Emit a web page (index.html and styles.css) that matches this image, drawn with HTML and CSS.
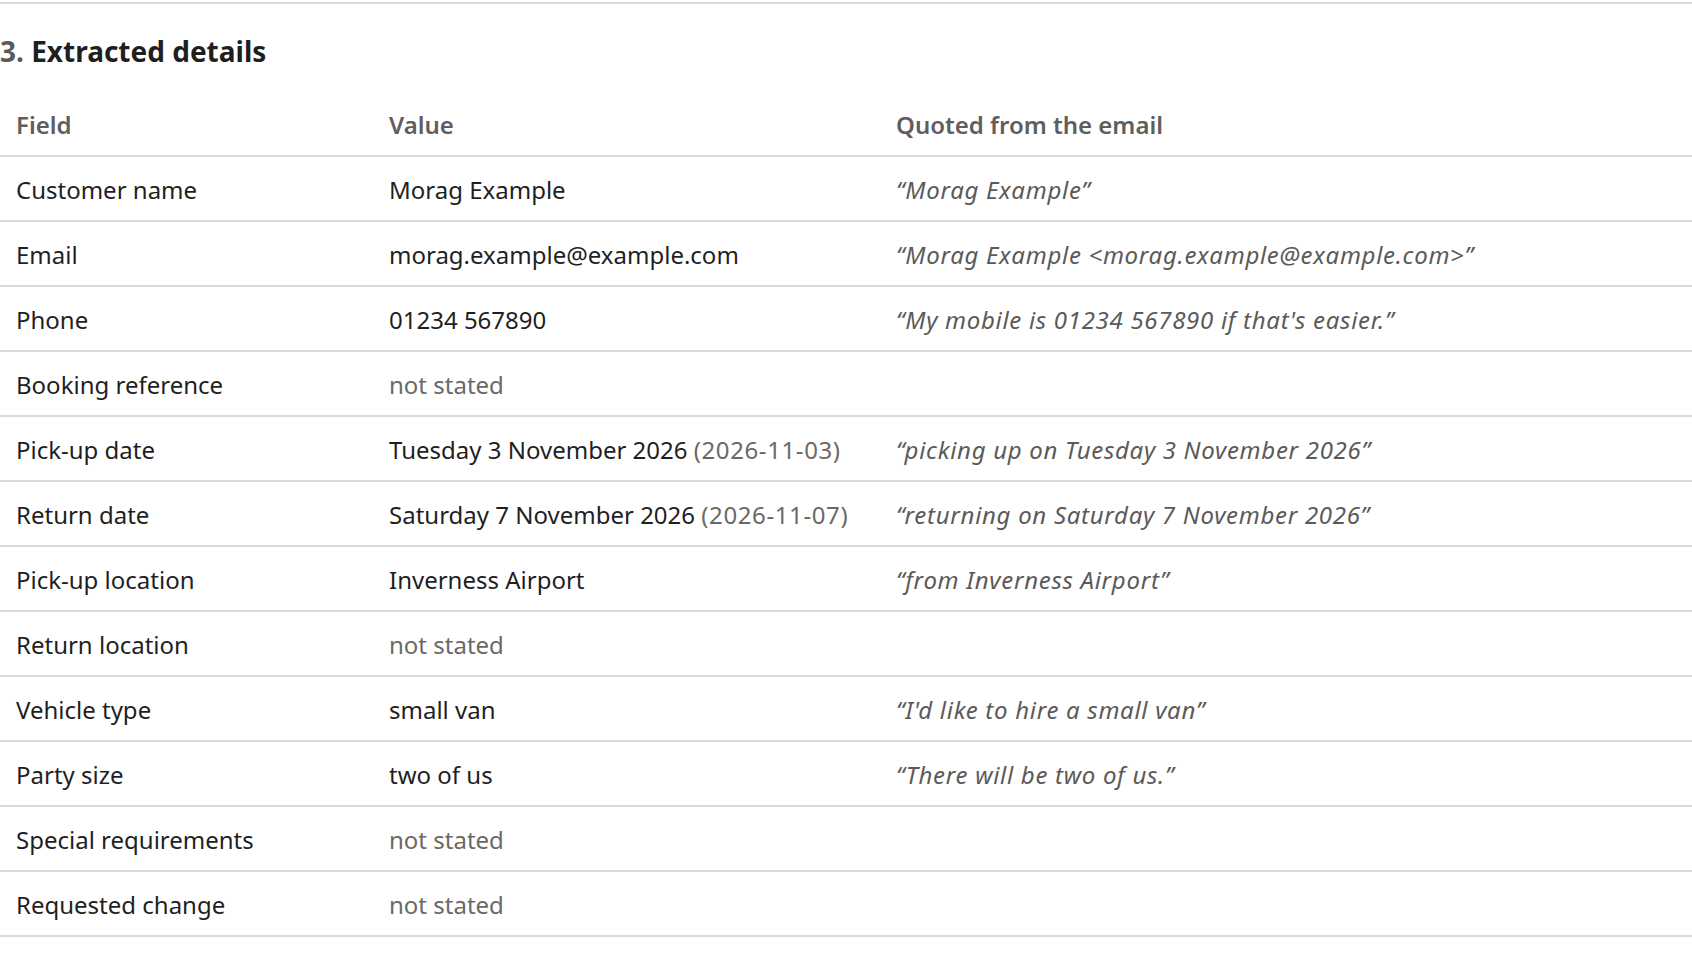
FILE: index.html
```html
<!DOCTYPE html>
<html lang="en">
<head>
<meta charset="utf-8">
<title>Extracted details</title>
<link rel="stylesheet" href="styles.css">
</head>
<body>
<section class="section">
  <h2 class="section-title"><span class="section-num">3.</span> Extracted details</h2>
  <table class="details">
    <thead>
      <tr><th class="col-field">Field</th><th class="col-value">Value</th><th class="col-quote">Quoted from the email</th></tr>
    </thead>
    <tbody>
      <tr><td>Customer name</td><td>Morag Example</td><td class="quote">“Morag Example”</td></tr>
      <tr><td>Email</td><td>morag.example@example.com</td><td class="quote">“Morag Example &lt;morag.example@example.com&gt;”</td></tr>
      <tr><td>Phone</td><td>01234 567890</td><td class="quote">“My mobile is 01234 567890 if that's easier.”</td></tr>
      <tr><td>Booking reference</td><td class="missing">not stated</td><td class="quote"></td></tr>
      <tr><td>Pick-up date</td><td>Tuesday 3 November 2026 <span class="iso">(2026-11-03)</span></td><td class="quote">“picking up on Tuesday 3 November 2026”</td></tr>
      <tr><td>Return date</td><td>Saturday 7 November 2026 <span class="iso">(2026-11-07)</span></td><td class="quote">“returning on Saturday 7 November 2026”</td></tr>
      <tr><td>Pick-up location</td><td>Inverness Airport</td><td class="quote">“from Inverness Airport”</td></tr>
      <tr><td>Return location</td><td class="missing">not stated</td><td class="quote"></td></tr>
      <tr><td>Vehicle type</td><td>small van</td><td class="quote">“I'd like to hire a small van”</td></tr>
      <tr><td>Party size</td><td>two of us</td><td class="quote">“There will be two of us.”</td></tr>
      <tr><td>Special requirements</td><td class="missing">not stated</td><td class="quote"></td></tr>
      <tr><td>Requested change</td><td class="missing">not stated</td><td class="quote"></td></tr>
    </tbody>
  </table>
</section>
</body>
</html>
```

FILE: styles.css
```css
html, body {
  margin: 0;
  padding: 0;
  background: #ffffff;
}
body {
  font-family: "Noto Sans", "Open Sans", sans-serif;
  color: #1f1f1f;
  font-size: 24px;
}
.section {
  margin-top: 2px;
  border-top: 2px solid #dcd8d4;
}
.section-title {
  margin: 0;
  padding: 26px 0 0 0;
  font-size: 28px;
  line-height: 42px;
  font-weight: 700;
  color: #1f1f1f;
}
.section-num {
  color: #5a5a5a;
}
.details {
  width: 100%;
  border-collapse: collapse;
  margin-top: 20px;
}
.details th,
.details td {
  text-align: left;
  padding: 15px 16px 12px 16px;
  line-height: 36px;
  border-bottom: 2px solid #dcd8d4;
  vertical-align: middle;
  white-space: nowrap;
}
.details th {
  font-weight: 600;
  color: #5f5e5c;
}
.col-field { width: 341px; }
.col-value { width: 475px; }
.quote {
  font-style: italic;
  color: #5c5a58;
  letter-spacing: 0.7px;
}
.missing,
.iso {
  color: #6b6966;
}
.iso {
  letter-spacing: 0.6px;
}
```
